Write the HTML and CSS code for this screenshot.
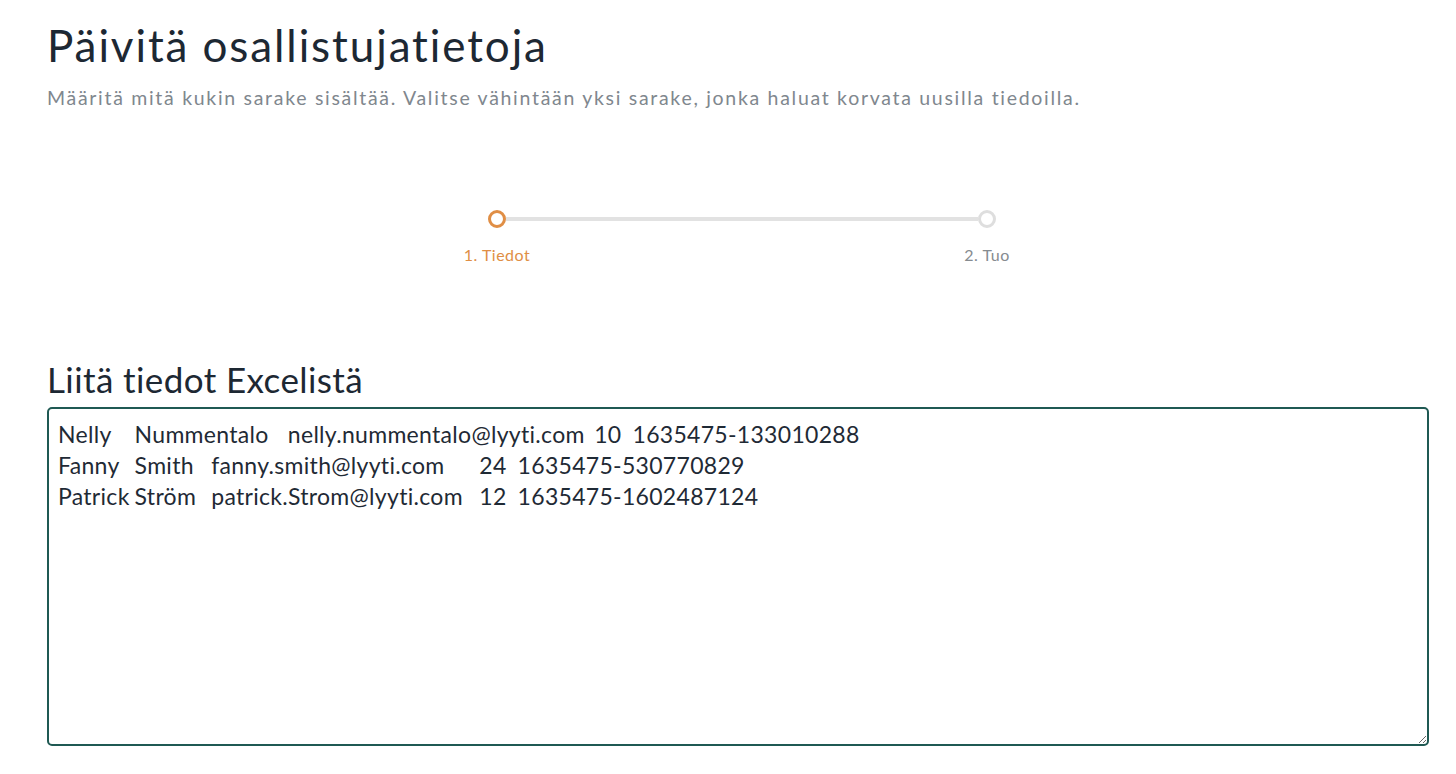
FILE: index.html
```html
<!DOCTYPE html>
<html lang="fi">
<head>
    <meta charset="UTF-8">
    <meta name="viewport" content="width=device-width, initial-scale=1.0">
    <title>Päivitä osallistujatietoja</title>
    <link rel="stylesheet" href="styles.css">
</head>
<body>
    <div class="page">
        <h1 class="title">Päivitä osallistujatietoja</h1>
        <p class="subtitle">Määritä mitä kukin sarake sisältää. Valitse vähintään yksi sarake, jonka haluat korvata uusilla tiedoilla.</p>

        <div class="stepper">
            <div class="track">
                <span class="dot active"></span>
                <span class="line"></span>
                <span class="dot"></span>
            </div>
            <div class="labels">
                <span class="label active">1. Tiedot</span>
                <span class="label">2. Tuo</span>
            </div>
        </div>

        <h2 class="section-title">Liitä tiedot Excelistä</h2>
        <textarea class="paste" spellcheck="false">Nelly	Nummentalo	nelly.nummentalo@lyyti.com	10	1635475-133010288
Fanny	Smith	fanny.smith@lyyti.com	24	1635475-530770829
Patrick	Ström	patrick.Strom@lyyti.com	12	1635475-1602487124</textarea>
    </div>
</body>
</html>
```

FILE: styles.css
```css
* {
    margin: 0;
    padding: 0;
    box-sizing: border-box;
    font-family: 'Lato', sans-serif;
}

body {
    background-color: #ffffff;
    color: #1d2833;
}

.page {
    padding: 17px 27px 0 47px;
}

.title {
    font-size: 44px;
    font-weight: 400;
    line-height: 56px;
    letter-spacing: 1.9px;
    color: #1d2833;
}

.subtitle {
    margin-top: 13px;
    font-size: 19.5px;
    line-height: 24px;
    letter-spacing: 1.7px;
    color: #80878e;
}

.stepper {
    width: 508px;
    margin: 100px auto 0;
    position: relative;
    left: 4px;
}

.track {
    display: flex;
    align-items: center;
}

.dot {
    width: 18px;
    height: 18px;
    border-radius: 50%;
    border: 3px solid #dedede;
    background-color: #fff;
    flex-shrink: 0;
}

.dot.active {
    border-color: #e08e45;
}

.line {
    flex: 1;
    height: 4px;
    background-color: #e2e2e2;
}

.labels {
    display: flex;
    justify-content: space-between;
    margin: 17px -51px 0;
}

.label {
    width: 120px;
    text-align: center;
    font-size: 16px;
    line-height: 20px;
    letter-spacing: 0.5px;
    color: #868b90;
}

.label.active {
    color: #e08e45;
}

.section-title {
    margin-top: 94px;
    font-size: 35px;
    font-weight: 400;
    line-height: 40px;
    letter-spacing: 0.4px;
    color: #1d2833;
}

.paste {
    display: block;
    width: 100%;
    height: 339px;
    margin-top: 8px;
    padding: 10px 9px;
    border: 2px solid #1f5953;
    border-radius: 5px;
    font-size: 23px;
    line-height: 31px;
    letter-spacing: 0.3px;
    color: #1f2a35;
    tab-size: 38.3px;
    outline: none;
}
```
